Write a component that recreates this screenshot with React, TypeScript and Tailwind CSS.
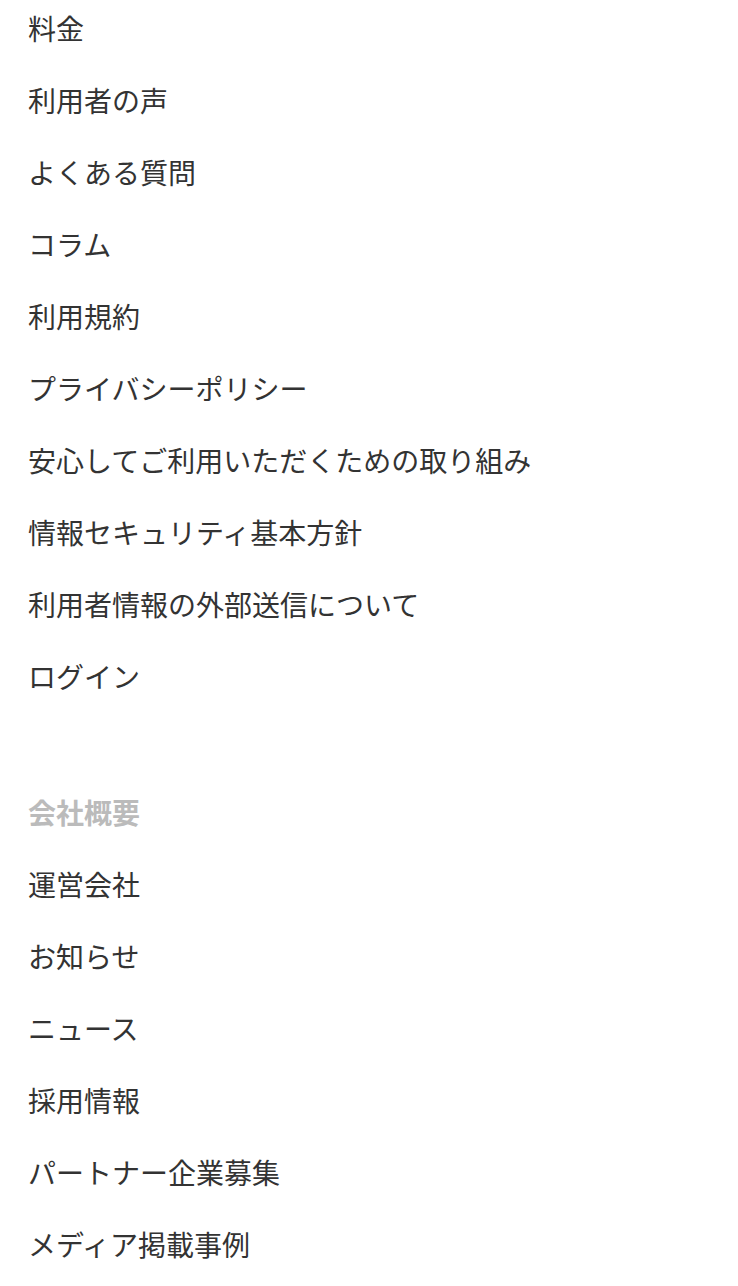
import React from 'react';

const SERVICE_LINKS = [
  '料金',
  '利用者の声',
  'よくある質問',
  'コラム',
  '利用規約',
  'プライバシーポリシー',
  '安心してご利用いただくための取り組み',
  '情報セキュリティ基本方針',
  '利用者情報の外部送信について',
  'ログイン',
];

const COMPANY_LINKS = ['運営会社', 'お知らせ', 'ニュース', '採用情報', 'パートナー企業募集', 'メディア掲載事例'];

export default function App() {
  return (
    <div
      className="min-h-screen bg-white px-[28px] pt-[7px] text-[28px] text-[#333333]"
      style={{ fontFamily: '"Noto Sans CJK JP", "Noto Sans", sans-serif' }}
    >
      <ul className="flex flex-col gap-[30px]">
        {SERVICE_LINKS.map(label => (
          <li key={label} className="h-[42px] leading-[42px] whitespace-nowrap">
            <a href="#">{label}</a>
          </li>
        ))}
      </ul>

      {/* Company section */}
      <div className="mt-[94px] flex flex-col gap-[30px]">
        <p className="h-[42px] leading-[42px] font-bold text-[#bbbbbb]">会社概要</p>
        {COMPANY_LINKS.map(label => (
          <a key={label} href="#" className="h-[42px] leading-[42px] whitespace-nowrap">
            {label}
          </a>
        ))}
      </div>
    </div>
  );
}
